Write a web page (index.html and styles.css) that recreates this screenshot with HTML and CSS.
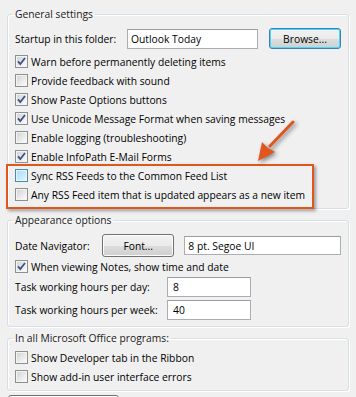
FILE: index.html
```html
<!DOCTYPE html>
<html lang="en">
<head>
    <meta charset="UTF-8">
    <meta name="viewport" content="width=device-width, initial-scale=1.0">
    <title>Outlook Options - Advanced</title>
    <link rel="stylesheet" href="styles.css">
</head>
<body>
    <div class="page">
        <fieldset class="group group-general">
            <legend>General settings</legend>
            <div class="row row-startup">
                <span class="label label-startup">Startup in this folder:</span>
                <span class="textbox textbox-folder">Outlook Today</span>
                <button class="btn btn-default btn-browse">Browse...</button>
            </div>
            <label class="check"><span class="cb on"><svg viewBox="0 0 11 11"><path d="M2 5.3 L4.3 8 L9 2"/></svg></span>Warn before permanently deleting items</label>
            <label class="check"><span class="cb"></span>Provide feedback with sound</label>
            <label class="check"><span class="cb on"><svg viewBox="0 0 11 11"><path d="M2 5.3 L4.3 8 L9 2"/></svg></span>Show Paste Options buttons</label>
            <label class="check"><span class="cb on"><svg viewBox="0 0 11 11"><path d="M2 5.3 L4.3 8 L9 2"/></svg></span>Use Unicode Message Format when saving messages</label>
            <label class="check"><span class="cb"></span>Enable logging (troubleshooting)</label>
            <label class="check"><span class="cb on"><svg viewBox="0 0 11 11"><path d="M2 5.3 L4.3 8 L9 2"/></svg></span>Enable InfoPath E-Mail Forms</label>

            <!-- the two RSS options, boxed in orange -->
            <div class="highlight">
                <label class="check"><span class="cb hover"></span>Sync RSS Feeds to the Common Feed List</label>
                <label class="check"><span class="cb"></span>Any RSS Feed item that is updated appears as a new item</label>
            </div>
        </fieldset>

        <fieldset class="group group-appearance">
            <legend>Appearance options</legend>
            <div class="row row-date">
                <span class="label label-date">Date Navigator:</span>
                <button class="btn btn-font">Font...</button>
                <span class="textbox textbox-font">8 pt. Segoe UI</span>
            </div>
            <label class="check"><span class="cb on"><svg viewBox="0 0 11 11"><path d="M2 5.3 L4.3 8 L9 2"/></svg></span>When viewing Notes, show time and date</label>
            <div class="row row-hours">
                <span class="label label-hours">Task working hours per day:</span>
                <span class="textbox textbox-hours">8</span>
            </div>
            <div class="row row-hours row-week">
                <span class="label label-hours">Task working hours per week:</span>
                <span class="textbox textbox-hours">40</span>
            </div>
        </fieldset>

        <fieldset class="group group-office">
            <legend>In all Microsoft Office programs:</legend>
            <label class="check"><span class="cb"></span>Show Developer tab in the Ribbon</label>
            <label class="check"><span class="cb"></span>Show add-in user interface errors</label>
        </fieldset>

        <div class="btn btn-cut"></div>

        <svg class="arrow" viewBox="0 0 50 50" width="50" height="50">
            <path class="arrow-line" d="M43 4 L20 28"/>
            <path class="arrow-head" d="M8 43 L12 24 L18 30 L25 34 Z"/>
        </svg>
    </div>
</body>
</html>
```

FILE: styles.css
```css
* {
    box-sizing: border-box;
}

html,
body {
    margin: 0;
    padding: 0;
    height: 100%;
    overflow: hidden;
}

body {
    background: #f0f0f0;
    color: #000;
    font-family: 'Open Sans', 'Noto Sans', sans-serif;
    font-size: 10.3px;
}

.page {
    position: relative;
    padding: 6px 7px 0 7px;
}

/* group boxes */

.group {
    margin: 0;
    padding: 6px 7px 6px 7px;
    border: 1px solid #d5dfe5;
    border-radius: 3px;
    box-shadow: inset 1px 1px 0 #fff, 1px 1px 0 #fff;
    min-width: 0;
}

.group legend {
    padding: 0 2px;
    margin-left: -2px;
    line-height: 16px;
    color: #1a1a1a;
}

.group-general {
    padding-bottom: 0;
}

.group-appearance {
    margin-top: 3px;
    padding-bottom: 5px;
}

.group-office {
    margin-top: 3px;
    padding-top: 2px;
    padding-bottom: 4px;
}

/* rows */

.row {
    display: flex;
    align-items: center;
}

.label {
    flex: none;
    white-space: nowrap;
}

.label-startup {
    width: 112px;
}

.label-date {
    width: 87px;
}

.label-hours {
    width: 152px;
}

.row-startup {
    height: 21px;
    margin-bottom: 3px;
}

.row-date {
    height: 23px;
}

.row-hours {
    height: 22px;
}

.row-week {
    margin-top: 1px;
}

.textbox {
    display: flex;
    align-items: center;
    height: 20px;
    padding: 0 2px 0 3px;
    background: #fff;
    border: 1px solid #abadb3;
    border-top-color: #9a9ca4;
    white-space: nowrap;
}

.textbox-folder {
    width: 131px;
}

.textbox-font {
    width: 158px;
    height: 19px;
    margin-left: 10px;
}

.textbox-hours {
    width: 84px;
    padding-left: 5px;
}

/* buttons */

.btn {
    display: flex;
    align-items: center;
    justify-content: center;
    font: inherit;
    color: #000;
    padding: 0;
    border: 1px solid #707070;
    border-radius: 3px;
    background: linear-gradient(#f2f2f2 0%, #ebebeb 50%, #dddddd 51%, #cfcfcf 100%);
    box-shadow: inset 0 0 0 1px #fcfcfc;
}

.btn-default {
    border-color: #3c7fb1;
    box-shadow: inset 0 0 0 1px #48d8fb;
}

.btn-browse {
    width: 72px;
    height: 21px;
    margin-left: 11px;
}

.btn-font {
    width: 73px;
    height: 23px;
}

.btn-cut {
    width: 111px;
    height: 12px;
    margin-top: 4px;
    margin-left: 1px;
}

/* checkboxes */

.check {
    display: flex;
    align-items: center;
    height: 19px;
    white-space: nowrap;
}

.cb {
    flex: none;
    width: 13px;
    height: 13px;
    margin-right: 3px;
    border: 1px solid #8e8f8f;
    background: linear-gradient(135deg, #cfcfcf 0%, #ececec 60%, #ffffff 100%);
    box-shadow: inset 0 0 0 1px #f4f4f4;
    display: flex;
    align-items: center;
    justify-content: center;
}

.cb.hover {
    border-color: #5586a3;
    background: linear-gradient(135deg, #a9d9fb 0%, #cbeafd 60%, #eaf7ff 100%);
    box-shadow: inset 0 0 0 1px #def9fa;
}

.cb svg {
    width: 11px;
    height: 11px;
}

.cb svg path {
    fill: none;
    stroke: #3d5286;
    stroke-width: 1.8;
}

/* orange callout */

.highlight {
    width: 308px;
    margin: -2px 0 -1px -9px;
    padding: 0 0 3px 7px;
    border: 2px solid #e0561d;
    box-shadow: 2px 2px 3px rgba(0, 0, 0, 0.35);
}

.arrow {
    position: absolute;
    left: 250px;
    top: 118px;
    overflow: visible;
    filter: drop-shadow(2px 2px 2px rgba(0, 0, 0, 0.45));
}

.arrow-line {
    fill: none;
    stroke: #e0561d;
    stroke-width: 3;
    stroke-linecap: round;
}

.arrow-head {
    fill: #e0561d;
}
```
